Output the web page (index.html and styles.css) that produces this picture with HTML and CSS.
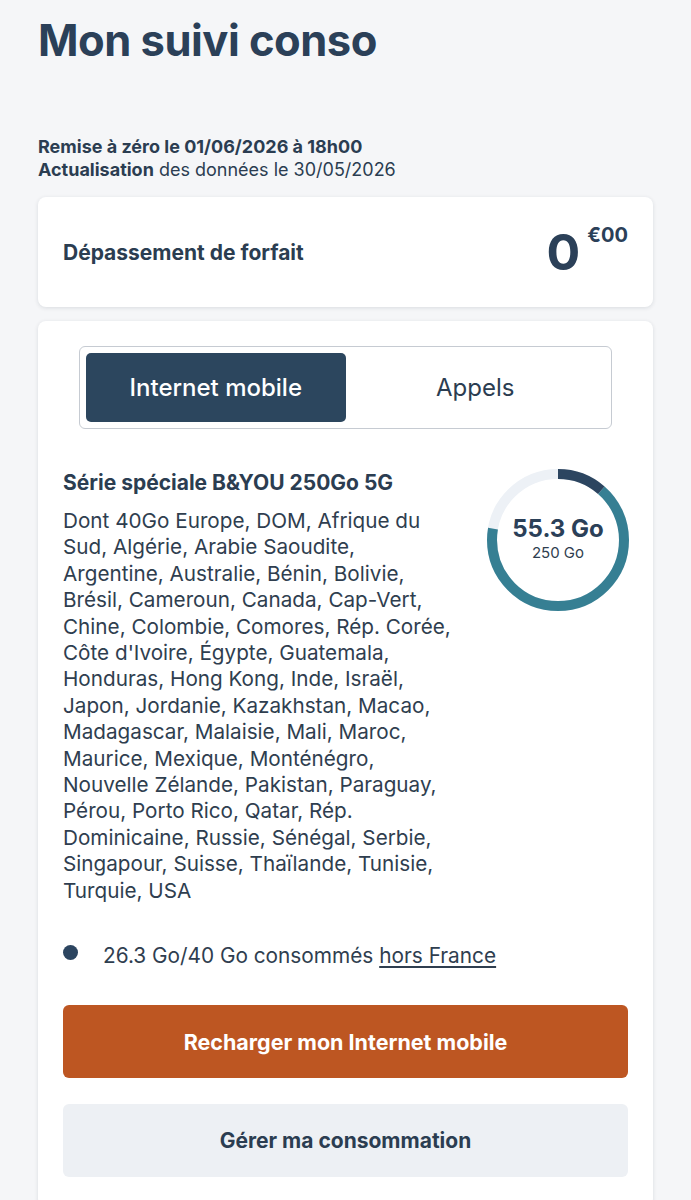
FILE: index.html
```html
<!DOCTYPE html>
<html lang="fr">
<head>
<meta charset="utf-8">
<title>Mon suivi conso</title>
<link rel="stylesheet" href="styles.css">
</head>
<body>
<main class="page">
  <h1 class="title">Mon suivi conso</h1>
  <div class="dates">
    <p class="reset">Remise à zéro le 01/06/2026 à 18h00</p>
    <p class="update"><strong>Actualisation</strong> des données le 30/05/2026</p>
  </div>

  <section class="card overage">
    <span class="overage-label">Dépassement de forfait</span>
    <span class="price"><span class="price-int">0</span><span class="price-dec">€00</span></span>
  </section>

  <section class="card usage">
    <div class="tabs">
      <button class="tab tab-active">Internet mobile</button>
      <button class="tab">Appels</button>
    </div>

    <div class="plan">
      <div class="plan-text">
        <h2 class="plan-title">Série spéciale B&amp;YOU 250Go 5G</h2>
        <p class="plan-desc">Dont 40Go Europe, DOM, Afrique du Sud, Algérie, Arabie Saoudite, Argentine, Australie, Bénin, Bolivie, Brésil, Cameroun, Canada, Cap-Vert, Chine, Colombie, Comores, Rép. Corée, Côte d'Ivoire, Égypte, Guatemala, Honduras, Hong Kong, Inde, Israël, Japon, Jordanie, Kazakhstan, Macao, Madagascar, Malaisie, Mali, Maroc, Maurice, Mexique, Monténégro, Nouvelle Zélande, Pakistan, Paraguay, Pérou, Porto Rico, Qatar, Rép. Dominicaine, Russie, Sénégal, Serbie, Singapour, Suisse, Thaïlande, Tunisie, Turquie, USA</p>
      </div>
      <div class="gauge">
        <svg class="gauge-ring" viewBox="0 0 144 144" width="144" height="144">
          <circle cx="72" cy="72" r="66" fill="none" stroke="#edf1f6" stroke-width="10"/>
          <circle cx="72" cy="72" r="66" fill="none" stroke="#367f93" stroke-width="10"
            pathLength="360" stroke-dasharray="0 41 239 80" transform="rotate(-90 72 72)"/>
          <circle cx="72" cy="72" r="66" fill="none" stroke="#2c4560" stroke-width="10"
            pathLength="360" stroke-dasharray="41 319" transform="rotate(-90 72 72)"/>
        </svg>
        <div class="gauge-label">
          <span class="gauge-value">55.3 Go</span>
          <span class="gauge-total">250 Go</span>
        </div>
      </div>
    </div>

    <div class="bullet">
      <span class="dot"></span>
      <span class="bullet-text">26.3 Go/40 Go consommés <a class="link" href="#">hors France</a></span>
    </div>

    <button class="btn btn-primary">Recharger mon Internet mobile</button>
    <button class="btn btn-secondary">Gérer ma consommation</button>
  </section>
</main>
</body>
</html>
```

FILE: styles.css
```css
* { box-sizing: border-box; }

html, body {
  margin: 0;
  padding: 0;
  background: #f5f6f8;
}

body {
  font-family: Inter, "Noto Sans", "Liberation Sans", sans-serif;
  color: #2b3d51;
}

.page {
  padding: 12px 38px 0 38px;
  display: flex;
  flex-direction: column;
}

.title {
  margin: 0;
  font-size: 43.5px;
  font-weight: 700;
  letter-spacing: -0.5px;
  line-height: 56px;
  color: #2b4058;
}

.dates {
  margin-top: 67px;
  font-size: 18px;
  line-height: 23px;
}

.dates p { margin: 0; }

.reset { font-weight: 700; }
.update strong { font-weight: 700; }
.update { font-weight: 400; }

.card {
  background: #ffffff;
  border-radius: 8px;
  box-shadow: 0 1px 4px rgba(20, 30, 50, 0.12);
}

.overage {
  margin-top: 16px;
  height: 110px;
  padding: 0 25px;
  display: flex;
  align-items: center;
  justify-content: space-between;
}

.overage-label {
  font-size: 21px;
  font-weight: 700;
}

.price {
  display: flex;
  align-items: flex-start;
  gap: 7px;
  color: #2b4058;
}

.price-int {
  font-size: 50px;
  font-weight: 700;
  line-height: 1;
}

.price-dec {
  font-size: 20px;
  font-weight: 700;
  line-height: 1;
  margin-top: -2px;
}

.usage {
  margin-top: 14px;
  padding: 25px 25px 30px 25px;
  display: flex;
  flex-direction: column;
}

.tabs {
  margin: 0 16px;
  border: 1px solid #c6cbd2;
  border-radius: 6px;
  padding: 6px;
  display: flex;
  height: 83px;
}

.tab {
  flex: 1;
  border: 0;
  background: transparent;
  font-family: inherit;
  font-size: 24px;
  color: #2b3d51;
  border-radius: 5px;
  cursor: pointer;
}

.tab-active {
  background: #2c465e;
  color: #ffffff;
  font-weight: 500;
}

.plan {
  margin-top: 41px;
  display: flex;
  justify-content: space-between;
}

.plan-text {
  width: 398px;
}

.plan-title {
  margin: 0;
  font-size: 21px;
  font-weight: 700;
  line-height: 26px;
}

.plan-desc {
  margin: 12px 0 0 0;
  font-size: 20.7px;
  line-height: 26.4px;
  color: #2f3e4f;
}

.gauge {
  position: relative;
  width: 144px;
  height: 144px;
  margin-top: -2px;
  margin-right: -2px;
}

.gauge-ring { display: block; }

.gauge-label {
  position: absolute;
  inset: 0;
  display: flex;
  flex-direction: column;
  align-items: center;
  justify-content: center;
  padding-bottom: 4px;
}

.gauge-value {
  font-size: 24px;
  font-weight: 700;
  line-height: 28px;
  color: #2b4058;
}

.gauge-total {
  font-size: 15px;
  line-height: 19px;
  color: #2f3e4f;
}

.bullet {
  margin-top: 39px;
  display: flex;
  align-items: flex-start;
  gap: 25px;
}

.dot {
  width: 15px;
  height: 15px;
  border-radius: 50%;
  background: #2c4560;
  margin-top: 2px;
  flex: none;
}

.bullet-text {
  font-size: 20.8px;
  line-height: 26px;
  color: #2f3e4f;
}

.link {
  color: inherit;
  text-decoration: underline;
  text-underline-offset: 3px;
}

.btn {
  display: block;
  width: 100%;
  height: 73px;
  border: 0;
  border-radius: 6px;
  font-family: inherit;
  font-size: 21.5px;
  font-weight: 700;
  cursor: pointer;
}

.btn-primary {
  margin-top: 36px;
  background: #bd5622;
  color: #ffffff;
}

.btn-secondary {
  margin-top: 26px;
  background: #edf0f4;
  color: #2b3d51;
  font-size: 21px;
}
```
